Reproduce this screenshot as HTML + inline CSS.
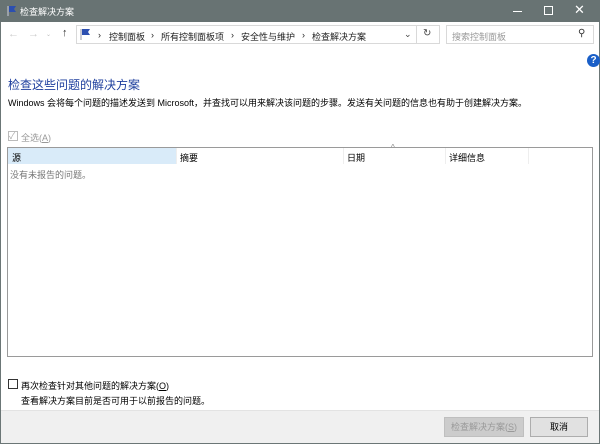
<!DOCTYPE html>
<html><head><meta charset="utf-8"><style>
*{margin:0;padding:0;box-sizing:border-box}
body{width:600px;height:444px;overflow:hidden;background:#fff;font-family:"Liberation Sans","Noto Sans CJK SC",sans-serif;font-size:9px;color:#000;position:relative}
.a{position:absolute;white-space:nowrap}
</style></head><body>
<div class="a" style="left:0;top:0;width:600px;height:444px;border:1px solid #6b7676;border-top:none"></div>
<div class="a" style="left:0;top:0;width:600px;height:22px;background:#687373"></div>
<svg class="a" style="left:6px;top:5px" width="12" height="11"><path d="M2 1v10" stroke="#ccd" stroke-width="1"/><path d="M3 1h7l-2 3 2 3H3z" fill="#2c4fb0"/></svg>
<div class="a" style="left:20px;top:5px;color:#fff;font-size:9px">检查解决方案</div>
<div class="a" style="left:513px;top:11px;width:9px;height:1px;background:#fff"></div>
<div class="a" style="left:544px;top:6px;width:9px;height:9px;border:1px solid #fff"></div>
<div class="a" style="left:574px;top:2px;color:#fff;font-size:13px">✕</div>
<div class="a" style="left:8px;top:28px;color:#ccc;font-size:11px">←</div>
<div class="a" style="left:28px;top:28px;color:#ccc;font-size:11px">→</div>
<div class="a" style="left:46px;top:31px;color:#bbb;font-size:6px">⌄</div>
<div class="a" style="left:62px;top:27px;color:#333;font-size:11px">↑</div>
<div class="a" style="left:76px;top:25px;width:364px;height:19px;border:1px solid #d9d9d9"></div>
<div class="a" style="left:416px;top:25px;width:1px;height:19px;background:#d9d9d9"></div>
<svg class="a" style="left:79px;top:28px" width="13" height="13"><path d="M2 1v11" stroke="#99a" /><path d="M3 1h8l-2 3 2 3H3z" fill="#2c4fb0"/></svg>
<div class="a" style="left:98px;top:30px;color:#222">›</div>
<div class="a" style="left:109px;top:30px;color:#222">控制面板</div>
<div class="a" style="left:151px;top:30px;color:#222">›</div>
<div class="a" style="left:161px;top:30px;color:#222">所有控制面板项</div>
<div class="a" style="left:231px;top:30px;color:#222">›</div>
<div class="a" style="left:241px;top:30px;color:#222">安全性与维护</div>
<div class="a" style="left:302px;top:30px;color:#222">›</div>
<div class="a" style="left:312px;top:30px;color:#222">检查解决方案</div>
<div class="a" style="left:404px;top:29px;font-size:9px;color:#444">⌄</div>
<div class="a" style="left:423px;top:28px;font-size:10px;color:#444">↻</div>
<div class="a" style="left:446px;top:25px;width:148px;height:19px;border:1px solid #d9d9d9"></div>
<div class="a" style="left:452px;top:30px;color:#999">搜索控制面板</div>
<div class="a" style="left:578px;top:28px;font-size:10px;color:#333">⚲</div>
<div class="a" style="left:587px;top:54px;width:13px;height:13px;border-radius:50%;background:#1a5fc8;color:#fff;font-size:10px;font-weight:bold;text-align:center;line-height:13px">?</div>
<div class="a" style="left:8px;top:76px;font-size:12px;color:#1e3f9e">检查这些问题的解决方案</div>
<div class="a" style="left:8px;top:96px;font-size:9px;color:#000">Windows 会将每个问题的描述发送到 Microsoft，并查找可以用来解决该问题的步骤。发送有关问题的信息也有助于创建解决方案。</div>
<div class="a" style="left:8px;top:131px;width:10px;height:10px;border:1px solid #bbb"></div>
<div class="a" style="left:9px;top:129px;color:#aaa;font-size:9px">✓</div>
<div class="a" style="left:21px;top:131px;color:#999">全选(<u>A</u>)</div>
<div class="a" style="left:7px;top:147px;width:586px;height:210px;border:1px solid #9a9a9a"></div>
<div class="a" style="left:8px;top:148px;width:168px;height:16px;background:#d9ebf9"></div>
<div class="a" style="left:176px;top:148px;width:1px;height:16px;background:#eee"></div>
<div class="a" style="left:343px;top:148px;width:1px;height:16px;background:#eee"></div>
<div class="a" style="left:445px;top:148px;width:1px;height:16px;background:#eee"></div>
<div class="a" style="left:528px;top:148px;width:1px;height:16px;background:#eee"></div>
<div class="a" style="left:12px;top:151px">源</div>
<div class="a" style="left:180px;top:151px">摘要</div>
<div class="a" style="left:347px;top:151px">日期</div>
<div class="a" style="left:391px;top:143px;color:#888;font-size:8px">^</div>
<div class="a" style="left:449px;top:151px">详细信息</div>
<div class="a" style="left:10px;top:168px;color:#777">没有未报告的问题。</div>
<div class="a" style="left:8px;top:379px;width:10px;height:10px;border:1px solid #333"></div>
<div class="a" style="left:21px;top:379px">再次检查针对其他问题的解决方案(<u>O</u>)</div>
<div class="a" style="left:21px;top:394px">查看解决方案目前是否可用于以前报告的问题。</div>
<div class="a" style="left:1px;top:410px;width:598px;height:33px;background:#f0f0f0;border-top:1px solid #e3e3e3"></div>
<div class="a" style="left:444px;top:417px;width:80px;height:20px;background:#ccc;border:1px solid #bfbfbf;color:#999;text-align:center;line-height:18px">检查解决方案(<u>S</u>)</div>
<div class="a" style="left:530px;top:417px;width:58px;height:20px;background:#e1e1e1;border:1px solid #adadad;text-align:center;line-height:18px">取消</div>
</body></html>
